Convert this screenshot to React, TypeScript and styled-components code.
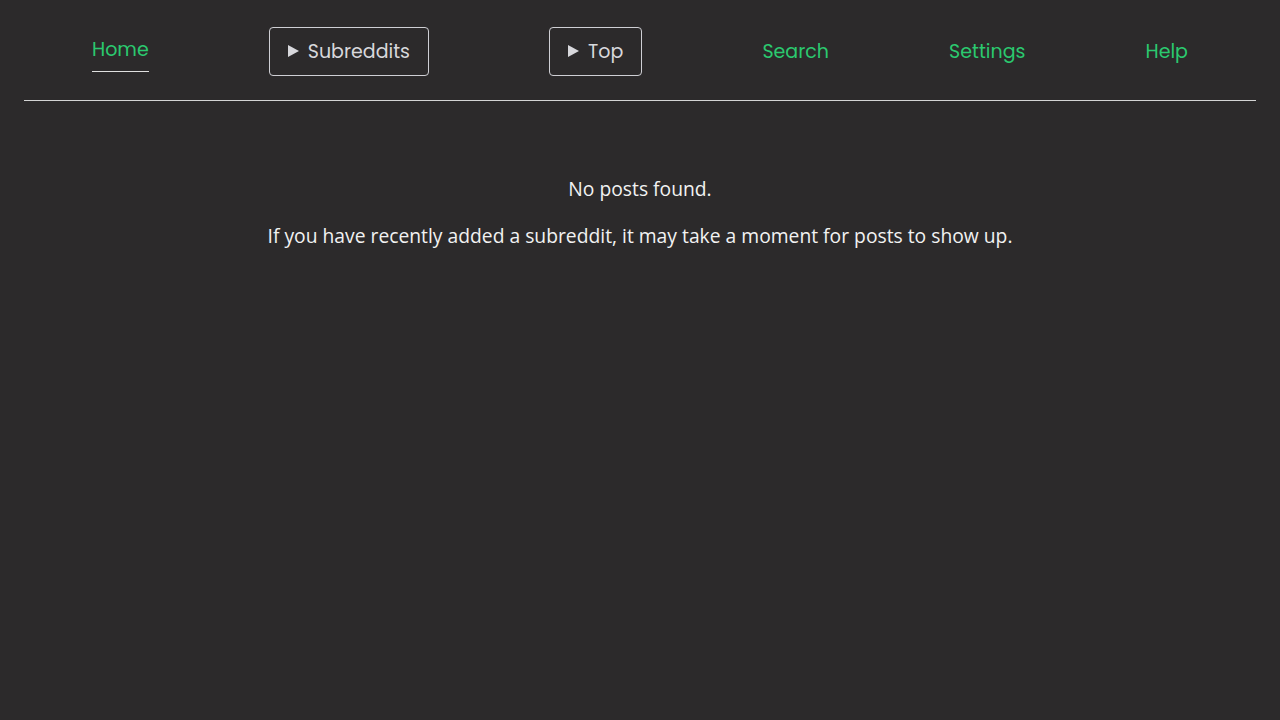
import React from "react";
import styled, { createGlobalStyle } from "styled-components";

const GlobalStyle = createGlobalStyle`
  html, body {
    margin: 0;
    padding: 0;
    background: #2c2a2b;
  }
  body {
    font-family: "Open Sans", "DejaVu Sans", sans-serif;
    color: #f2f2f2;
  }
`;

const navItems = [
  { label: "Home", kind: "link", active: true },
  { label: "Subreddits", kind: "menu" },
  { label: "Top", kind: "menu" },
  { label: "Search", kind: "link" },
  { label: "Settings", kind: "link" },
  { label: "Help", kind: "link" },
];

const Triangle = () => (
  <svg width="11" height="12" viewBox="0 0 11 12">
    <path d="M0 0 L11 6 L0 12 Z" fill="#d8d8dc" />
  </svg>
);

const App = () => {
  return (
    <Page>
      <GlobalStyle />
      <Nav>
        {navItems.map((item) =>
          item.kind === "menu" ? (
            <MenuButton key={item.label}>
              <Triangle />
              <span>{item.label}</span>
            </MenuButton>
          ) : (
            <NavLink key={item.label} $active={item.active}>
              {item.label}
            </NavLink>
          )
        )}
      </Nav>
      <Main>
        <Message>No posts found.</Message>
        <Message>
          If you have recently added a subreddit, it may take a moment for posts
          to show up.
        </Message>
      </Main>
    </Page>
  );
};

export default App;

const Page = styled.div`
  min-height: 720px;
  padding: 0 24px;
  box-sizing: border-box;
`;

const Nav = styled.nav`
  display: flex;
  justify-content: space-around;
  align-items: center;
  height: 101px;
  padding: 2px 8px 0;
  box-sizing: border-box;
  border-bottom: 1px solid #d4d4d4;
  font-family: "Poppins", "Inter", "Lato", sans-serif;
  font-size: 19px;
`;

const NavLink = styled.a`
  display: flex;
  align-items: center;
  height: 44px;
  margin-top: -2px;
  color: #2bc96f;
  cursor: pointer;
  box-sizing: border-box;
  border-bottom: ${({ $active }) => ($active ? "1px solid #e0e0e0" : "1px solid transparent")};
  padding-top: ${({ $active }) => ($active ? "0" : "4px")};
`;

const MenuButton = styled.div`
  display: flex;
  align-items: center;
  gap: 9px;
  height: 49px;
  padding: 0 18px;
  box-sizing: border-box;
  border: 1px solid #cfcfd4;
  border-radius: 4px;
  color: #d8d8dc;
  cursor: pointer;
`;

const Main = styled.main`
  display: flex;
  flex-direction: column;
  align-items: center;
  gap: 19px;
  padding-top: 74px;
`;

const Message = styled.p`
  margin: 0;
  font-size: 19.3px;
  line-height: 28px;
  color: #f2f2f2;
`;
